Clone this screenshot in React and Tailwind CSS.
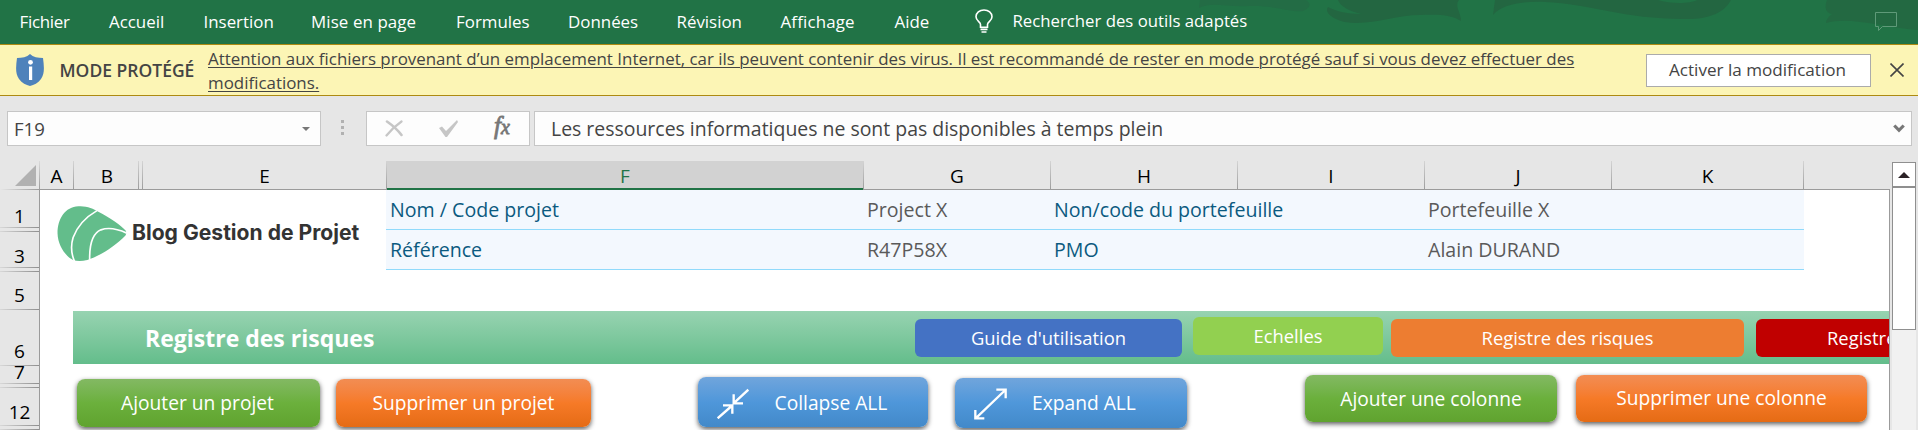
import clsx from 'clsx';

const menu = [
  { label: 'Fichier', classes: 'w-[89.5px] tracking-[-0.3px]' },
  { label: 'Accueil', classes: 'w-[94.5px]' },
  { label: 'Insertion', classes: 'w-[107.5px]' },
  { label: 'Mise en page', classes: 'w-[145px] tracking-[0.1px]' },
  { label: 'Formules', classes: 'w-[112px]' },
  { label: 'Données', classes: 'w-[108.5px]' },
  { label: 'Révision', classes: 'w-[104px]' },
  { label: 'Affichage', classes: 'w-[114px] tracking-[0.15px]' },
  { label: 'Aide', classes: 'w-[80.5px]' },
];

const columns = [
  { name: 'A', classes: 'w-[34px]' },
  { name: 'B', classes: 'w-[65px]' },
  { name: '', classes: 'w-[4px]' },
  { name: 'E', classes: 'w-[244px]' },
  { name: 'F', classes: 'w-[477px]', selected: true },
  { name: 'G', classes: 'w-[187px]' },
  { name: 'H', classes: 'w-[187px]' },
  { name: 'I', classes: 'w-[187px]' },
  { name: 'J', classes: 'w-[187px]' },
  { name: 'K', classes: 'w-[192px]' },
];

const rows = [
  { name: '1', classes: 'h-[38px]', label: 'pb-[2px]' },
  { name: '', classes: 'h-[4px]' },
  { name: '3', classes: 'h-[36px]', label: 'pb-[2px]' },
  { name: '', classes: 'h-[4px]' },
  { name: '5', classes: 'h-[38px]', label: 'pb-[5px]' },
  { name: '6', classes: 'h-[56px]', label: 'pb-[5px]' },
  { name: '7', classes: 'h-[18px]', label: 'pb-[2px]' },
  { name: '', classes: 'h-[4px]' },
  { name: '12', classes: 'h-[38px]', label: 'pb-[4px]' },
  { name: '', classes: 'h-[4px]' },
];

const RibbonArt = () => (
  <svg
    className="absolute right-0 top-0"
    width="740"
    height="44"
    viewBox="1178 0 740 44"
  >
    <path
      d="M1200 0 L1199 8 C1212 1 1228 8 1250 6 C1275 5 1290 13 1303 11 C1310 8 1312 4 1306 0Z"
      fill="#236c45"
    />
    <path
      d="M1338 0 C1340 6 1350 12 1362 14 C1345 14 1336 11 1328 7 C1324 12 1332 19 1345 22 C1370 26 1395 15 1420 15 C1440 14 1452 15 1461 21 C1461 12 1454 6 1459 0Z"
      fill="#236641"
    />
    <path
      d="M1495 0 L1493 15 C1502 5 1520 1 1545 2 C1590 4 1625 19 1683 19 C1705 20 1724 14 1731 0 L1697 0 C1690 4 1670 4 1658 0Z"
      fill="#236641"
    />
    <path
      d="M1827 0 C1824 8 1826 13 1832 14 C1828 17 1826 20 1826 23 C1850 16 1880 27 1918 30 L1918 0Z"
      fill="#236942"
    />
  </svg>
);

const Ribbon = () => (
  <div className="relative flex h-[45px] border-b border-[#ad8a12] bg-[#217346] pl-[19.5px] text-[16.9px] leading-[44px] text-white">
    <RibbonArt />
    {menu.map((item) => (
      <span
        key={item.label}
        className={clsx('relative shrink-0 whitespace-nowrap', item.classes)}
      >
        {item.label}
      </span>
    ))}
    <svg
      className="relative mt-[9px] shrink-0"
      width="18"
      height="24"
      viewBox="0 0 18 24"
      fill="none"
      stroke="#fff"
      strokeWidth="1.6"
    >
      <path d="M5.5 18.2 V15.5 C5.5 13 1 12 1 7.8 C1 4 4.5 1 9 1 S17 4 17 7.8 C17 12 12.5 13 12.5 15.5 V18.2Z" />
      <path d="M5.5 20.4 H12.5 M6.5 23 H11.5" />
    </svg>
    <span className="relative ml-[19.5px] whitespace-nowrap text-[16.75px] leading-[42px]">
      Rechercher des outils adaptés
    </span>
    <svg
      className="relative ml-auto mr-[20px] mt-[12px] shrink-0"
      width="23"
      height="20"
      viewBox="0 0 23 20"
      fill="none"
      stroke="#5f9a79"
    >
      <path d="M.5 .5 H21.5 V14.5 H7.5 L3.5 18.5 V14.5 H.5Z" />
    </svg>
  </div>
);

const ProtectedBar = () => (
  <div className="flex h-[51px] items-center border-b border-[#ad8a12] bg-[#fcf5b5] text-[#444]">
    <svg className="ml-[16px] shrink-0" width="28" height="32" viewBox="0 0 28 32">
      <path
        d="M14 0 C17 3 22 4 27 4 C28 12 29 19 25 25 C22 29 18 31 14 32 C10 31 6 29 3 25 C-1 19 0 12 1 4 C6 4 11 3 14 0Z"
        fill="#4e82bb"
      />
      <circle cx="14.5" cy="8.3" r="2.4" fill="#fff" />
      <rect x="13" y="12.5" width="3.2" height="13.5" fill="#fff" />
    </svg>
    <span className="ml-[15.5px] w-[148.5px] shrink-0 whitespace-nowrap text-[17.5px] font-semibold">
      MODE PROTÉGÉ
    </span>
    <p className="whitespace-nowrap pt-[2px] text-[16.91px] leading-[24px] underline decoration-1 underline-offset-2">
      Attention aux fichiers provenant d’un emplacement Internet, car ils
      peuvent contenir des virus. Il est recommandé de rester en mode protégé
      sauf si vous devez effectuer des
      <br />
      modifications.
    </p>
    <button className="ml-auto mr-[19px] h-[33px] w-[225px] shrink-0 border border-[#ababab] bg-white pr-[2px] text-[17.1px] leading-[30px]">
      Activer la modification
    </button>
    <svg
      className="mr-[14px] shrink-0"
      width="14"
      height="14"
      viewBox="0 0 14 14"
      stroke="#444"
      strokeWidth="1.6"
    >
      <path d="M.5 .5 L13.5 13.5 M13.5 .5 L.5 13.5" />
    </svg>
  </div>
);

const FormulaBar = () => (
  <div className="flex h-[65px] pt-[15px] text-[19.45px] leading-[35px] text-[#444]">
    <div className="ml-[7px] flex h-[35px] w-[314px] items-center justify-between border border-[#c6c6c6] bg-[#fdfdfd] pl-[6px] pr-[10px]">
      <span className="text-[18.6px]">F19</span>
      <svg width="8" height="4" viewBox="0 0 8 4">
        <path d="M0 0 H8 L4 4Z" fill="#777" />
      </svg>
    </div>
    <div className="ml-[20px] mt-[9px] flex w-[3px] flex-col gap-[3px]">
      <i className="size-[3px] bg-[#b1b1b1]" />
      <i className="size-[3px] bg-[#b1b1b1]" />
      <i className="size-[3px] bg-[#b1b1b1]" />
    </div>
    <div className="ml-[22px] flex h-[35px] w-[164px] border border-[#c6c6c6] bg-[#fdfdfd]">
      <svg
        className="ml-[18px] mt-[8px]"
        width="18"
        height="17"
        viewBox="0 0 18 17"
        stroke="#c6c6c6"
        strokeLinecap="round"
        fill="none"
      >
        <path d="M2 1.5 C7 5 12 9 16.5 15" strokeWidth="2.6" />
        <path d="M16.5 1.5 C10 6 5 11 1.5 15.5" strokeWidth="2.2" />
      </svg>
      <svg className="ml-[36px] mt-[8px]" width="19" height="17" viewBox="0 0 19 17">
        <path d="M0 8 L3 6.5 L7 11 L18 0 L19 2 L8 17 L6.5 17Z" fill="#c6c6c6" />
      </svg>
      <span className="ml-[36px] font-['Liberation_Serif',serif] text-[25px] italic leading-[27px] text-[#777] [-webkit-text-stroke:0.8px_#777]">
        f<span className="text-[20px]">x</span>
      </span>
    </div>
    <div className="ml-[4px] flex h-[35px] w-[1378px] items-center justify-between border border-[#c6c6c6] bg-[#fdfdfd] pl-[16px] pr-[6px]">
      <span>
        Les ressources informatiques ne sont pas disponibles à temps plein
      </span>
      <svg width="12" height="9" viewBox="0 0 12 9" fill="none">
        <path d="M1.3 1.5 L6 6.3 L10.7 1.5" stroke="#777" strokeWidth="3.2" />
      </svg>
    </div>
  </div>
);

const ColumnHeaders = () => (
  <div className="flex h-[29px] w-[1890px] text-[19px] leading-[31px] text-black">
    <div className="flex w-[40px] shrink-0 bg-linear-to-b from-[#dadada] to-[#9b9b9b] pr-px">
      <div className="w-[39px] bg-linear-to-r from-[#e6e6e6] to-[#9b9b9b] pb-px">
        <div className="h-[28px] bg-[#e6e6e6] pl-[15px] pt-[4px]">
          <svg width="21" height="21" viewBox="0 0 21 21">
            <path d="M21 0 V21 H0Z" fill="#b1b1b1" />
          </svg>
        </div>
      </div>
    </div>
    {columns.map((col, i) => (
      <div
        key={i}
        className={clsx(
          'shrink-0 bg-linear-to-b from-[#d4d4d4] to-[#9b9b9b] pr-px text-center',
          col.classes,
        )}
      >
        <div
          className={clsx(
            'h-[29px]',
            col.selected
              ? 'border-b-2 border-[#217346] bg-[#d2d2d2] text-[#217346]'
              : 'border-b border-[#9b9b9b] bg-[#e6e6e6]',
            col.name === 'B' && 'pl-[2px]',
          )}
        >
          {col.name}
        </div>
      </div>
    ))}
    <div className="grow border-b border-[#9b9b9b]" />
  </div>
);

const RowHeaders = () => (
  <div className="flex w-[40px] shrink-0 flex-col border-r border-[#9b9b9b] text-center text-[19px] leading-[18px] text-black">
    {rows.map((row, i) => (
      <div
        key={i}
        className={clsx(
          'shrink-0 bg-linear-to-r from-[#d8d8d8] to-[#8f8f8f] pb-px',
          row.classes,
        )}
      >
        <div className="flex h-full items-end justify-center bg-[#e6e6e6]">
          {row.name && <span className={row.label}>{row.name}</span>}
        </div>
      </div>
    ))}
  </div>
);

const Logo = () => (
  <div className="flex w-[346px] shrink-0 items-start pl-[17px] pt-[16px]">
    <svg width="70" height="55" viewBox="171 167 210 166" fill="none">
      <path
        d="M235 168 C260 166 280 176 295 184 C330 202 365 225 378 242 C380 247 380 252 377 256 C350 285 300 318 262 330 C245 334 230 333 220 331 C195 318 173 285 172 250 C172 205 195 170 235 168Z"
        fill="#63bd8b"
      />
      <path
        d="M291 181 C258 200 231 230 219 262 C211 288 213 310 223 334 M381 249 C355 237 325 231 303 239 C277 250 268 282 269 330"
        stroke="#fff"
        strokeWidth="5"
      />
    </svg>
    <span className="ml-[5px] mt-[13px] whitespace-nowrap font-[Inter,sans-serif] text-[21.1px] font-bold leading-[28px] text-[#333]">
      Blog Gestion de Projet
    </span>
  </div>
);

const InfoRow = ({ cells }) => (
  <div className="grid h-[40px] grid-cols-[477px_187px_374px_380px] border-b border-[#90dafb] bg-[#f3f8fe] text-[19.6px] leading-[40px] *:pl-[4px]">
    {cells.map((cell, i) => (
      <span
        key={cell}
        className={clsx(
          'whitespace-nowrap',
          i % 2 === 0 ? 'text-[#0b5a80]' : 'text-[#5a5a5a]',
        )}
      >
        {cell}
      </span>
    ))}
  </div>
);

const NavButton = ({ children, classes }) => (
  <button
    className={clsx(
      'shrink-0 whitespace-nowrap rounded-[6px] text-[18.4px] leading-[38px] text-white',
      classes,
    )}
  >
    {children}
  </button>
);

const ActionButton = ({ children, classes }) => (
  <button
    className={clsx(
      'flex shrink-0 items-center justify-center whitespace-nowrap rounded-[8px] text-[19.2px] text-white shadow-[0_2px_5px_rgba(0,0,0,0.65)]',
      classes,
    )}
  >
    {children}
  </button>
);

const green = 'bg-linear-to-b from-[#83b963] via-[#6bb03c] to-[#60a32f]';
const orange = 'bg-linear-to-b from-[#f28d53] via-[#f67a27] to-[#e56b14]';
const blue = 'bg-linear-to-b from-[#70a5dc] via-[#4f97da] to-[#4289c9]';

const Sheet = () => (
  <div className="h-[240px] w-[1850px] overflow-hidden border-r border-[#9b9b9b] bg-white">
    <div className="flex h-[121px]">
      <Logo />
      <div className="w-[1418px]">
        <InfoRow
          cells={['Nom / Code projet', 'Project X', 'Non/code du portefeuille', 'Portefeuille X']}
        />
        <InfoRow cells={['Référence', 'R47P58X', 'PMO', 'Alain DURAND']} />
      </div>
    </div>

    <div className="ml-[33px] flex h-[53px] items-start bg-linear-to-b from-[#97d3b1] to-[#63bd8b]">
      <h1 className="w-[842px] shrink-0 pl-[72px] text-[23px] font-bold leading-[55px] text-white">
        Registre des risques
      </h1>
      <NavButton classes="mt-[8px] w-[267px] bg-[#4472c4]">
        Guide d'utilisation
      </NavButton>
      <NavButton classes="ml-[11px] mt-[6px] w-[190px] bg-[#92d050]">
        Echelles
      </NavButton>
      <NavButton classes="ml-[8px] mt-[8px] w-[353px] bg-[#ed7d31]">
        Registre des risques
      </NavButton>
      <NavButton classes="ml-[12px] mt-[8px] w-[353px] bg-[#c00000] pl-[71px] text-left">
        Registre des actions
      </NavButton>
    </div>

    <div className="flex h-[66px] items-start">
      <ActionButton classes={clsx('ml-[37px] mt-[15px] h-[48px] w-[243px] pr-[2px] pt-px', green)}>
        Ajouter un projet
      </ActionButton>
      <ActionButton classes={clsx('ml-[16px] mt-[15px] h-[48px] w-[255px] pt-px', orange)}>
        Supprimer un projet
      </ActionButton>
      <ActionButton classes={clsx('ml-[107px] mt-[13px] h-[50px] w-[230px] pr-[22px] pt-[2px]', blue)}>
        <svg
          className="mr-[26px]"
          width="32"
          height="31"
          viewBox="110 292 96 93"
          fill="none"
          stroke="#fff"
          strokeWidth="7"
        >
          <path d="M204 297 L162 336 M160 311 V338 H188 M112 383 L154 346 M128 344 H156 V369" />
        </svg>
        Collapse ALL
      </ActionButton>
      <ActionButton classes={clsx('ml-[27px] mt-[14px] h-[50px] w-[232px] pr-[32px] pt-px', blue)}>
        <svg
          className="mr-[25px]"
          width="33"
          height="32"
          viewBox="887 292 99 96"
          fill="none"
          stroke="#fff"
          strokeWidth="7"
        >
          <path d="M892 383 L981 298 M954 297 H982 V323 M891 358 V383 H918" />
        </svg>
        Expand ALL
      </ActionButton>
      <ActionButton classes={clsx('ml-[118px] mt-[11px] h-[47px] w-[252px] pt-px', green)}>
        Ajouter une colonne
      </ActionButton>
      <ActionButton classes={clsx('ml-[19px] mt-[11px] h-[47px] w-[291px]', orange)}>
        Supprimer une colonne
      </ActionButton>
    </div>
  </div>
);

const ScrollBar = () => (
  <div className="ml-auto mr-[2px] mt-px flex h-[268px] w-[24px] flex-col bg-[#f1f1f1]">
    <div className="flex h-[25px] shrink-0 items-center justify-center border border-[#8f8f8f] bg-white">
      <svg width="12" height="6" viewBox="0 0 12 6">
        <path d="M6 0 L12 6 H0Z" fill="#2b2226" />
      </svg>
    </div>
    <div className="h-[143px] shrink-0 border border-[#8f8f8f] bg-white" />
  </div>
);

export default function App() {
  return (
    <div className="h-[430px] w-[1918px] overflow-hidden bg-[#e6e6e6] font-['Open_Sans',sans-serif]">
      <Ribbon />
      <ProtectedBar />
      <FormulaBar />
      <div className="flex h-[269px]">
        <div className="shrink-0">
          <ColumnHeaders />
          <div className="flex">
            <RowHeaders />
            <Sheet />
          </div>
        </div>
        <ScrollBar />
      </div>
    </div>
  );
}
